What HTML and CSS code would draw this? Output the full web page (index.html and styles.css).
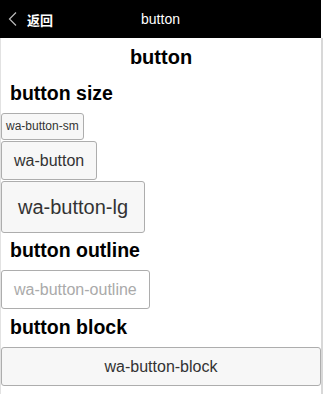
FILE: index.html
```html
<!DOCTYPE html>
<html lang="zh-CN">
<head>
    <meta charset="UTF-8">
    <title>button</title>
    <link rel="stylesheet" href="styles.css">
</head>
<body>
    <div class="page">
        <div class="topbar">
            <a class="back" href="#">
                <svg class="back-icon" width="9" height="14" viewBox="0 0 9 14">
                    <polyline points="8,0.5 1.5,7 8,13.5" fill="none" stroke="#bbb" stroke-width="1.2"/>
                </svg>
                <span>返回</span>
            </a>
            <span class="topbar-title">button</span>
        </div>
        <div class="main">
            <h1 class="page-title">button</h1>

            <h2 class="section-title first">button size</h2>
            <div class="btn-list">
                <button class="wa-button wa-button-sm">wa-button-sm</button>
                <button class="wa-button">wa-button</button>
                <button class="wa-button wa-button-lg">wa-button-lg</button>
            </div>

            <h2 class="section-title">button outline</h2>
            <div class="btn-list">
                <button class="wa-button wa-button-outline">wa-button-outline</button>
            </div>

            <h2 class="section-title">button block</h2>
            <div class="btn-list">
                <button class="wa-button wa-button-block">wa-button-block</button>
            </div>
        </div>
    </div>
</body>
</html>
```

FILE: styles.css
```css
body {
    margin: 0;
    font-family: 'Liberation Sans', Arial, 'Noto Sans CJK SC', sans-serif;
    color: #000;
    background-color: #fff;
}

.page {
    width: 323px;
}

.topbar {
    position: relative;
    width: 321px;
    height: 38px;
    background-color: #000;
    color: #fff;
    display: flex;
    align-items: center;
    justify-content: center;
}

.back {
    position: absolute;
    left: 8px;
    top: 0;
    height: 38px;
    display: flex;
    align-items: center;
    gap: 10px;
    color: #fff;
    text-decoration: none;
    font-size: 13px;
    font-weight: bold;
}

.back-icon {
    display: block;
}

.topbar-title {
    font-size: 14px;
}

.main {
    width: 320px;
    border-left: 1px solid #e2e2e2;
    border-right: 2px solid #d8d8d8;
    height: 356px;
    overflow: hidden;
}

.page-title {
    margin: 7px 0 0;
    font-size: 20px;
    line-height: 24px;
    text-align: center;
}

.section-title {
    margin: 6px 0 8px;
    padding-left: 9px;
    font-size: 19.5px;
    line-height: 24px;
}

.section-title.first {
    margin-top: 12px;
}

.btn-list {
    display: flex;
    flex-direction: column;
    align-items: flex-start;
    gap: 1px;
}

.wa-button {
    font-family: 'Liberation Sans', Arial, sans-serif;
    font-size: 16px;
    line-height: 17px;
    padding: 10px 12px;
    color: #333;
    background-color: #f7f7f7;
    border: 1px solid #adadad;
    border-radius: 3px;
    cursor: pointer;
}

.wa-button-sm {
    font-size: 12px;
    line-height: 15px;
    padding: 5px 4px;
}

.wa-button-lg {
    font-size: 20px;
    line-height: 22px;
    padding: 14px 16px;
    margin-bottom: -1px;
}

.wa-button-outline {
    background-color: #fff;
    color: #aaa;
}

.wa-button-block {
    width: 320px;
    text-align: center;
}
```
